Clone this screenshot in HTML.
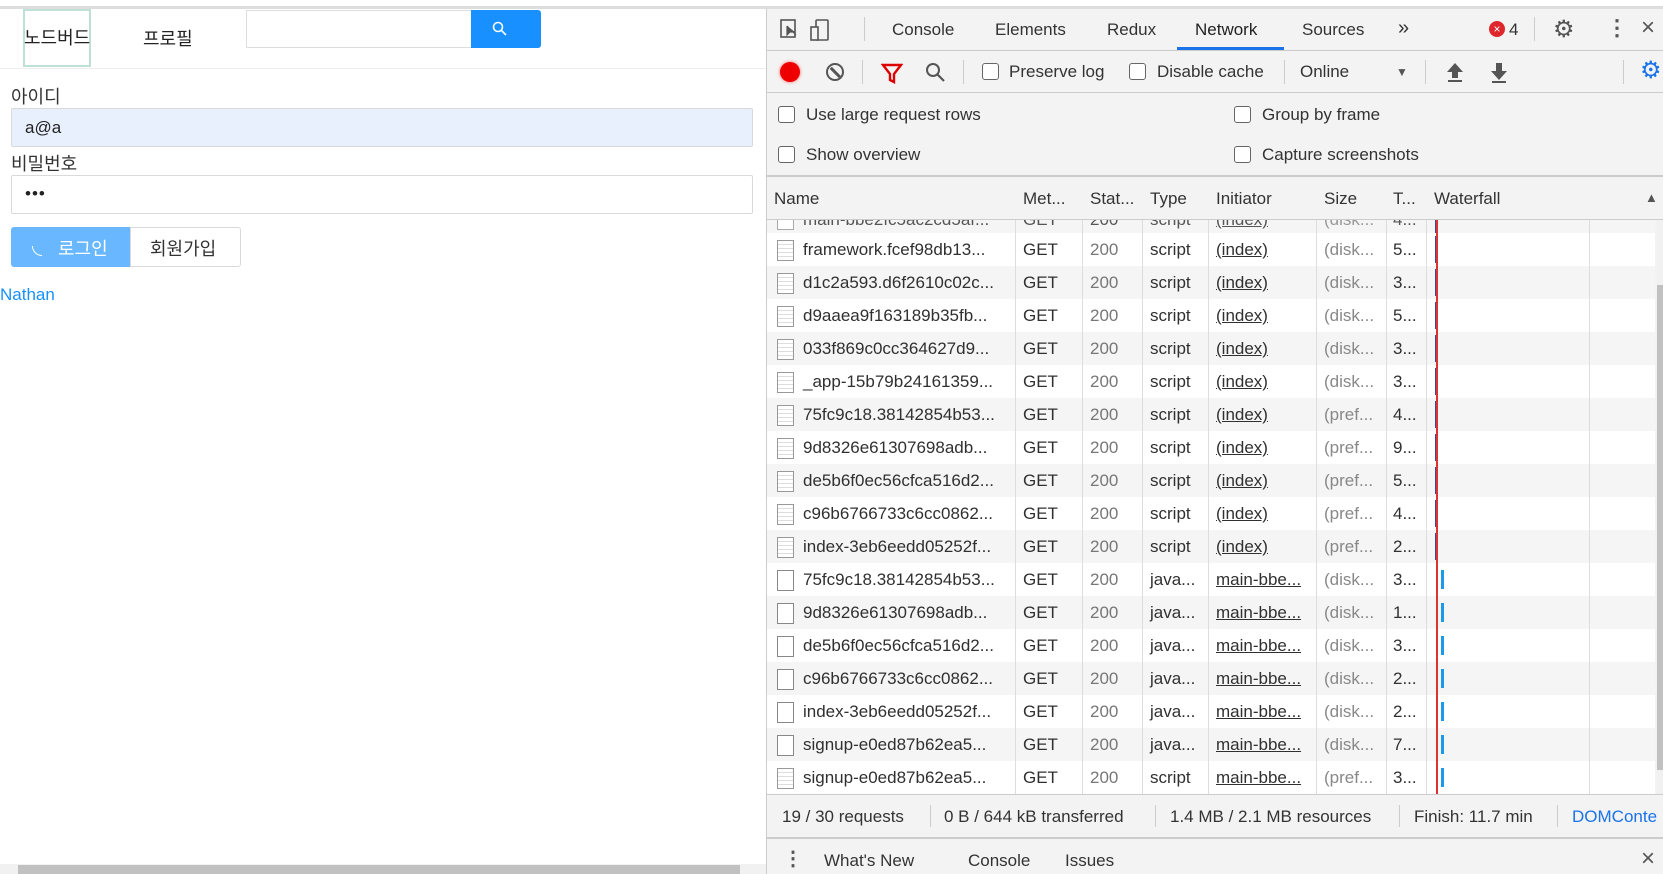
<!DOCTYPE html>
<html><head><meta charset="utf-8"><style>
*{margin:0;padding:0;box-sizing:border-box}
body{width:1663px;height:874px;overflow:hidden;background:#fff;font-family:"Liberation Sans","Noto Sans CJK KR",sans-serif;position:relative;color:#333}
.a{position:absolute}
.dt{font-size:17px;color:#333;white-space:nowrap}
.cb{position:absolute;width:17px;height:17px;border:1px solid #666;border-radius:3px;background:#fff}
.row{position:absolute;left:767px;width:888px;height:33px;font-size:17px;color:#303030;white-space:nowrap}
.row span{position:absolute;top:7px}
.ic{position:absolute;left:10px;top:7px;width:17px;height:21px;border:1px solid #999;background:#fff}
.vl{position:absolute;top:0;width:1px;height:33px;background:#ddd}
u{text-decoration:underline}
</style></head><body>
<div class="a" style="left:0;top:6px;width:1663px;height:3px;background:#ddd"></div>
<div class="a" style="left:23px;top:9px;width:68px;height:58px;border:2px solid #bfe0d6"></div>
<div class="a" style="left:24px;top:24px;font-size:18px;color:#222">노드버드</div>
<div class="a" style="left:143px;top:25px;font-size:18px;color:#222">프로필</div>
<div class="a" style="left:246px;top:10px;width:226px;height:38px;border:1px solid #ddd;border-right:none"></div>
<div class="a" style="left:471px;top:10px;width:70px;height:38px;background:#1890ff;border-radius:0 3px 3px 0"></div>
<svg class="a" style="left:491px;top:20px" width="18" height="18" viewBox="0 0 18 18"><circle cx="7" cy="7" r="4.5" fill="none" stroke="#fff" stroke-width="1.6"/><path d="M10 10l5 5" stroke="#fff" stroke-width="1.6"/></svg>
<div class="a" style="left:0;top:68px;width:766px;height:1px;background:#eee"></div>
<div class="a" style="left:11px;top:83px;font-size:18px;color:#333">아이디</div>
<div class="a" style="left:11px;top:108px;width:742px;height:39px;background:#e8f0fe;border:1px solid #d9d9d9;border-radius:2px"></div>
<div class="a" style="left:25px;top:118px;font-size:17px;color:#222">a@a</div>
<div class="a" style="left:11px;top:150px;font-size:18px;color:#333">비밀번호</div>
<div class="a" style="left:11px;top:175px;width:742px;height:39px;border:1px solid #d9d9d9;border-radius:2px"></div>
<div class="a" style="left:25px;top:184px;font-size:17px;color:#222;letter-spacing:1px">•••</div>
<div class="a" style="left:11px;top:227px;width:120px;height:40px;background:#69b8ff;border-radius:3px 0 0 3px"></div>
<div class="a" style="left:32px;top:246px;width:10px;height:10px;border-left:1.5px solid #fff;border-bottom:1.5px solid #fff;border-radius:0 0 0 10px"></div>
<div class="a" style="left:58px;top:235px;font-size:18px;color:#fff">로그인</div>
<div class="a" style="left:130px;top:227px;width:111px;height:40px;border:1px solid #d9d9d9;border-radius:0 3px 3px 0"></div>
<div class="a" style="left:150px;top:235px;font-size:18px;color:#333">회원가입</div>
<div class="a" style="left:0;top:285px;font-size:17px;color:#1890ff">Nathan</div>
<div class="a" style="left:0;top:864px;width:766px;height:10px;background:#f1f1f1"></div>
<div class="a" style="left:18px;top:865px;width:722px;height:9px;background:#c1c1c1"></div>
<div class="a" style="left:766px;top:9px;width:897px;height:865px;background:#f3f3f3;border-left:1px solid #ccc"></div>
<div class="a" style="left:767px;top:50px;width:896px;height:1px;background:#ccc"></div>
<svg class="a" style="left:779px;top:18px" width="60" height="24"><rect x="2" y="2" width="14" height="17" fill="none" stroke="#555" stroke-width="1.6"/><path d="M8 8l9 9M8 8v9l3-3h5" fill="#555" stroke="#555" stroke-width="1.2"/><rect x="37" y="2" width="12" height="20" rx="1" fill="none" stroke="#555" stroke-width="1.6"/><rect x="32" y="9" width="7" height="13" fill="#f3f3f3" stroke="#555" stroke-width="1.6"/></svg>
<div class="a" style="left:864px;top:17px;width:1px;height:24px;background:#ccc"></div>
<div class="a dt" style="left:892px;top:20px">Console</div>
<div class="a dt" style="left:995px;top:20px">Elements</div>
<div class="a dt" style="left:1107px;top:20px">Redux</div>
<div class="a dt" style="left:1195px;top:20px;color:#222">Network</div>
<div class="a" style="left:1177px;top:47px;width:107px;height:3px;background:#1a73e8"></div>
<div class="a dt" style="left:1302px;top:20px">Sources</div>
<div class="a dt" style="left:1398px;top:17px;font-size:20px">»</div>
<div class="a" style="left:1489px;top:21px;width:16px;height:16px;border-radius:50%;background:#e0262d;color:#fff;font-size:12px;text-align:center;line-height:16px">×</div>
<div class="a dt" style="left:1509px;top:20px">4</div>
<div class="a" style="left:1534px;top:17px;width:1px;height:24px;background:#ccc"></div>
<div class="a" style="left:1553px;top:15px;font-size:24px;color:#555">⚙</div>
<div class="a" style="left:1606px;top:15px;font-size:22px;color:#555;font-weight:bold">⋮</div>
<div class="a" style="left:1641px;top:14px;font-size:24px;color:#555">×</div>
<div class="a" style="left:780px;top:62px;width:20px;height:20px;border-radius:50%;background:#e00;box-shadow:0 0 3px #f66"></div>
<div class="a" style="left:826px;top:63px;width:18px;height:18px;border-radius:50%;border:2.5px solid #555"></div>
<div class="a" style="left:829px;top:71px;width:13px;height:2.5px;background:#555;transform:rotate(45deg)"></div>
<div class="a" style="left:862px;top:60px;width:1px;height:24px;background:#ccc"></div>
<svg class="a" style="left:881px;top:62px" width="22" height="22"><path d="M2 3h18l-7 9v8l-4-2v-6z" fill="none" stroke="#d00" stroke-width="2.4"/></svg>
<svg class="a" style="left:924px;top:61px" width="22" height="22"><circle cx="9" cy="9" r="6" fill="none" stroke="#555" stroke-width="2"/><path d="M13 13l7 7" stroke="#555" stroke-width="2.2"/></svg>
<div class="a" style="left:963px;top:60px;width:1px;height:24px;background:#ccc"></div>
<div class="cb" style="left:982px;top:63px"></div>
<div class="a dt" style="left:1009px;top:62px">Preserve log</div>
<div class="cb" style="left:1129px;top:63px"></div>
<div class="a dt" style="left:1157px;top:62px">Disable cache</div>
<div class="a" style="left:1284px;top:60px;width:1px;height:24px;background:#ccc"></div>
<div class="a dt" style="left:1300px;top:62px">Online</div>
<div class="a" style="left:1396px;top:65px;font-size:12px;color:#555">▼</div>
<div class="a" style="left:1425px;top:60px;width:1px;height:24px;background:#ccc"></div>
<svg class="a" style="left:1445px;top:61px" width="20" height="22"><path d="M10 2l-8 9h5v6h6v-6h5z" fill="#555"/><rect x="3" y="19" width="14" height="2" fill="#555"/></svg>
<svg class="a" style="left:1489px;top:61px" width="20" height="22"><path d="M10 19l-8-9h5V2h6v8h5z" fill="#555"/><rect x="3" y="20" width="14" height="2" fill="#555"/></svg>
<div class="a" style="left:1623px;top:60px;width:1px;height:24px;background:#ccc"></div>
<div class="a" style="left:1640px;top:56px;font-size:24px;color:#1a73e8">⚙</div>
<div class="a" style="left:767px;top:92px;width:896px;height:1px;background:#ccc"></div>
<div class="cb" style="left:778px;top:106px"></div>
<div class="a dt" style="left:806px;top:105px">Use large request rows</div>
<div class="cb" style="left:1234px;top:106px"></div>
<div class="a dt" style="left:1262px;top:105px">Group by frame</div>
<div class="cb" style="left:778px;top:146px"></div>
<div class="a dt" style="left:806px;top:145px">Show overview</div>
<div class="cb" style="left:1234px;top:146px"></div>
<div class="a dt" style="left:1262px;top:145px">Capture screenshots</div>
<div class="a" style="left:767px;top:175px;width:896px;height:2px;background:#ccc"></div>
<div class="a" style="left:767px;top:177px;width:896px;height:43px;background:#f3f3f3;border-bottom:1px solid #ccc"></div>
<div class="a dt" style="left:774px;top:189px">Name</div>
<div class="a dt" style="left:1023px;top:189px">Met...</div>
<div class="a dt" style="left:1090px;top:189px">Stat...</div>
<div class="a dt" style="left:1150px;top:189px">Type</div>
<div class="a dt" style="left:1216px;top:189px">Initiator</div>
<div class="a dt" style="left:1324px;top:189px">Size</div>
<div class="a dt" style="left:1393px;top:189px">T...</div>
<div class="a dt" style="left:1434px;top:189px">Waterfall</div>
<div class="a" style="left:1645px;top:190px;font-size:13px;color:#555">▲</div>
<div class="a" style="left:767px;top:220px;width:888px;height:574px;background:#fff"></div>
<div class="a" style="left:767px;top:220px;width:888px;height:14px;background:#f5f5f5;overflow:hidden;font-size:17px;color:#555;white-space:nowrap">
<div style="position:absolute;top:-10px;left:36px">main-bbe2fc5ac2cd5af...</div>
<div style="position:absolute;top:-10px;left:256px">GET</div>
<div style="position:absolute;top:-10px;left:323px">200</div>
<div style="position:absolute;top:-10px;left:383px">script</div>
<div style="position:absolute;top:-10px;left:449px;text-decoration:underline">(index)</div>
<div style="position:absolute;top:-10px;left:557px;color:#999">(disk...</div>
<div style="position:absolute;top:-10px;left:626px">4...</div>
<div style="position:absolute;top:-4px;left:10px;width:17px;height:14px;border:1px solid #aaa;background:#fff"></div>
<div class="vl" style="left:248px"></div><div class="vl" style="left:315px"></div><div class="vl" style="left:375px"></div><div class="vl" style="left:441px"></div><div class="vl" style="left:549px"></div><div class="vl" style="left:619px"></div><div class="vl" style="left:659px"></div><div class="vl" style="left:822px"></div>
<div style="position:absolute;left:668px;top:0;width:3px;height:14px;background:#3a4a9a"></div>
</div>
<div id="rows"></div>
<script>
const R=[["framework.fcef98db13...","script","(index)","(disk...","5...",0],["d1c2a593.d6f2610c02c...","script","(index)","(disk...","3...",0],["d9aaea9f163189b35fb...","script","(index)","(disk...","5...",0],["033f869c0cc364627d9...","script","(index)","(disk...","3...",0],["_app-15b79b24161359...","script","(index)","(disk...","3...",0],["75fc9c18.38142854b53...","script","(index)","(pref...","4...",0],["9d8326e61307698adb...","script","(index)","(pref...","9...",0],["de5b6f0ec56cfca516d2...","script","(index)","(pref...","5...",0],["c96b6766733c6cc0862...","script","(index)","(pref...","4...",0],["index-3eb6eedd05252f...","script","(index)","(pref...","2...",0],["75fc9c18.38142854b53...","java...","main-bbe...","(disk...","3...",1],["9d8326e61307698adb...","java...","main-bbe...","(disk...","1...",1],["de5b6f0ec56cfca516d2...","java...","main-bbe...","(disk...","3...",1],["c96b6766733c6cc0862...","java...","main-bbe...","(disk...","2...",1],["index-3eb6eedd05252f...","java...","main-bbe...","(disk...","2...",1],["signup-e0ed87b62ea5...","java...","main-bbe...","(disk...","7...",1],["signup-e0ed87b62ea5...","script","main-bbe...","(pref...","3...",1]];
let h="";
R.forEach((r,i)=>{const y=233+i*33;const bg=i%2?"#f5f5f5":"#fff";
const icon=r[5]&&i<16?'<div class="ic" style="border-color:#888"></div>':'<div class="ic" style="background:repeating-linear-gradient(#fff 0 3px,#ddd 3px 4px)"></div>';
h+=`<div class="row" style="top:${y}px;background:${bg}">${icon}<span style="left:36px">${r[0]}</span><span style="left:256px">GET</span><span style="left:323px;color:#777">200</span><span style="left:383px">${r[1]}</span><span style="left:449px"><u>${r[2]}</u></span><span style="left:557px;color:#888">${r[3]}</span><span style="left:626px">${r[4]}</span>
<div class="vl" style="left:248px"></div><div class="vl" style="left:315px"></div><div class="vl" style="left:375px"></div><div class="vl" style="left:441px"></div><div class="vl" style="left:549px"></div><div class="vl" style="left:619px"></div><div class="vl" style="left:659px"></div><div class="vl" style="left:822px"></div>
${r[5]?'<div style="position:absolute;left:674px;top:7px;width:3px;height:19px;background:#1a9ae8"></div>':'<div style="position:absolute;left:668px;top:3px;width:3px;height:27px;background:#3a4a9a"></div>'}</div>`;});
document.getElementById("rows").innerHTML=h;
</script>
<div class="a" style="left:1436px;top:220px;width:1.5px;height:574px;background:#d33"></div>
<div class="a" style="left:1657px;top:220px;width:6px;height:574px;background:#f1f1f1"></div>
<div class="a" style="left:1657px;top:285px;width:6px;height:485px;background:#c1c1c1"></div>
<div class="a" style="left:767px;top:794px;width:896px;height:1px;background:#ccc"></div>
<div class="a dt" style="left:782px;top:807px">19 / 30 requests</div>
<div class="a" style="left:930px;top:805px;width:1px;height:22px;background:#ccc"></div>
<div class="a dt" style="left:944px;top:807px">0 B / 644 kB transferred</div>
<div class="a" style="left:1155px;top:805px;width:1px;height:22px;background:#ccc"></div>
<div class="a dt" style="left:1170px;top:807px">1.4 MB / 2.1 MB resources</div>
<div class="a" style="left:1399px;top:805px;width:1px;height:22px;background:#ccc"></div>
<div class="a dt" style="left:1414px;top:807px">Finish: 11.7 min</div>
<div class="a" style="left:1557px;top:805px;width:1px;height:22px;background:#ccc"></div>
<div class="a dt" style="left:1572px;top:807px;color:#1a73e8">DOMConte</div>
<div class="a" style="left:767px;top:837px;width:896px;height:2px;background:#ccc"></div>
<div class="a" style="left:783px;top:846px;font-size:20px;color:#555;font-weight:bold">⋮</div>
<div class="a dt" style="left:824px;top:851px">What's New</div>
<div class="a dt" style="left:968px;top:851px">Console</div>
<div class="a dt" style="left:1065px;top:851px">Issues</div>
<div class="a" style="left:1641px;top:845px;font-size:24px;color:#555">×</div>
</body></html>
